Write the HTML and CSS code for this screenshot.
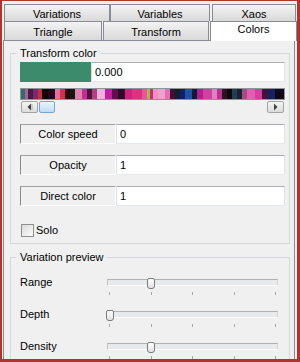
FILE: index.html
```html
<!DOCTYPE html>
<html>
<head>
<meta charset="utf-8">
<link rel="stylesheet" href="styles.css">
</head>
<body>
<div class="window">
  <div class="tabs">
    <div class="tabrow first">
      <div class="tab w-variations">Variations</div>
      <div class="tab w-variables">Variables</div>
      <div class="tab w-xaos">Xaos</div>
    </div>
    <div class="tabrow second">
      <div class="tab w-triangle">Triangle</div>
      <div class="tab w-transform">Transform</div>
      <div class="tab active w-colors">Colors</div>
    </div>
  </div>
  <div class="page">
    <fieldset class="group group-color">
      <legend>Transform color</legend>
      <div class="color-row">
        <div class="swatch"></div>
        <div class="field">0.000</div>
      </div>
      <div class="gradient"></div>
      <div class="hscroll">
        <div class="sbtn"><svg width="7" height="8" viewBox="0 0 7 8"><path d="M5 0.5 L1.5 4 L5 7.5 Z" fill="#404040"/><path d="M6 1 L6 7" stroke="#b0b0b0" stroke-width="1"/></svg></div>
        <div class="sthumb"></div>
        <div class="strack"></div>
        <div class="sbtn"><svg width="7" height="8" viewBox="0 0 7 8"><path d="M2 0.5 L5.5 4 L2 7.5 Z" fill="#404040"/></svg></div>
      </div>
      <div class="prop first-prop">
        <div class="plabel">Color speed</div>
        <div class="field">0</div>
      </div>
      <div class="prop">
        <div class="plabel">Opacity</div>
        <div class="field">1</div>
      </div>
      <div class="prop">
        <div class="plabel">Direct color</div>
        <div class="field">1</div>
      </div>
      <div class="check"><span class="box"></span><span class="check-text">Solo</span></div>
    </fieldset>
    <fieldset class="group group-preview">
      <legend>Variation preview</legend>
      <div class="slider-row first-slider">
        <div class="slabel">Range</div>
        <div class="slider">
          <div class="track"></div>
          <div class="thumb" style="left:41px"></div>
          <div class="ticks"><i></i><i></i><i></i><i></i><i></i></div>
        </div>
      </div>
      <div class="slider-row">
        <div class="slabel">Depth</div>
        <div class="slider">
          <div class="track"></div>
          <div class="thumb" style="left:0px"></div>
          <div class="ticks"><i></i><i></i><i></i><i></i><i></i></div>
        </div>
      </div>
      <div class="slider-row">
        <div class="slabel">Density</div>
        <div class="slider">
          <div class="track"></div>
          <div class="thumb" style="left:41px"></div>
          <div class="ticks"><i></i><i></i><i></i><i></i><i></i></div>
        </div>
      </div>
    </fieldset>
  </div>
</div>
</body>
</html>
```

FILE: styles.css
```css
* { box-sizing: border-box; }

body {
  margin: 0;
  font-family: "Liberation Sans", Arial, sans-serif;
  font-size: 11px;
  color: #000;
  background: #f0f0f0;
}

.window {
  width: 300px;
  height: 362px;
  border-style: solid;
  border-color: #b3332c;
  border-width: 1px 3px 3px 2px;
  background: #f0f0f0;
  overflow: hidden;
}

/* ---------- tabs ---------- */
.tabs {
  padding: 3px 0 0 2px;
}

.tabrow {
  display: flex;
}

.tabrow.first { height: 17px; }
.tabrow.second { height: 19px; }

.tab {
  border: 1px solid #898c95;
  border-bottom: none;
  background: linear-gradient(#f3f3f3, #e6e6e6 50%, #d9d9d9);
  text-align: center;
  white-space: nowrap;
}

.first .tab { line-height: 16px; padding-top: 1px; }
.second .tab { line-height: 18px; padding-top: 1px; }

.w-variations { width: 106px; }
.w-variables { width: 100px; }
.w-xaos { width: 84px; margin-left: 2px; }
.w-triangle { width: 98px; }
.w-transform { width: 106px; margin-left: 1px; }
.w-colors { width: 87px; margin-left: 1px; }

.second .tab.active {
  background: #ffffff;
  height: 20px;
  line-height: 15px;
  padding-top: 0;
  position: relative;
  z-index: 1;
}

/* ---------- page ---------- */
.page {
  margin-left: 1px;
  width: 292px;
  height: 330px;
  border: 1px solid #898c95;
  background: #f0f0f0;
}

.group {
  margin: 6px 0 0 6px;
  width: 280px;
  padding: 0 4px 6px 9px;
  border: 1px solid #d5d9dd;
  min-width: 0;
}

.group legend {
  padding: 0 3px 0 4px;
  margin-left: -4px;
  line-height: 13px;
}

.group-preview {
  margin-top: 7px;
}

/* colour row */
.color-row {
  display: flex;
  height: 20px;
  margin-top: 2px;
}

.swatch {
  width: 71px;
  background: #3b8b6c;
}

.field {
  flex: 1;
  background: #ffffff;
  border: 1px solid;
  border-color: #abadb3 #e2e3ea #e3e9ef #dbdfe6;
  padding: 0 3px;
  line-height: 18px;
}

/* gradient */
.gradient {
  margin-top: 6px;
  height: 12px;
  border: 1px solid #8f939a;
  background: linear-gradient(to right,
    #2a6e6e 0 4px, #b06090 4px 7px, #4a1848 7px 12px, #7a2a6a 12px 17px,
    #c03040 17px 21px, #100008 21px 27px, #200818 27px 34px, #e070a0 34px 39px,
    #d03050 39px 44px, #300010 44px 49px, #101a10 49px 54px, #e080b0 54px 61px,
    #c03090 61px 66px, #501040 66px 71px, #b04080 71px 76px, #f0b0e0 76px 84px,
    #c020a0 84px 91px, #601050 91px 97px, #300828 97px 104px, #d02080 104px 111px,
    #e03080 111px 121px, #f050a0 121px 126px, #a0c040 126px 129px, #c03080 129px 132px,
    #f090c0 132px 137px, #f0a0d0 137px 144px, #e070b0 144px 149px, #401038 149px 154px,
    #102030 154px 159px, #102060 159px 164px, #2050a0 164px 171px, #101840 171px 176px,
    #b02090 176px 182px, #d040a0 182px 191px, #e080c0 191px 196px, #c03090 196px 201px,
    #301020 201px 206px, #100810 206px 211px, #204050 211px 216px, #202030 216px 221px,
    #a05080 221px 226px, #e060b0 226px 234px, #d040a0 234px 241px, #401040 241px 247px,
    #182060 247px 254px, #100818 254px 263px);
}

/* horizontal scrollbar */
.hscroll {
  display: flex;
  height: 12px;
  margin-top: 1px;
  padding: 0 1px;
}

.sbtn {
  width: 17px;
  border: 1px solid #a3a3a3;
  border-radius: 2px;
  background: linear-gradient(#f4f4f4, #dcdcdc);
  display: flex;
  align-items: center;
  justify-content: center;
}

.sthumb {
  width: 16px;
  margin-left: 1px;
  border: 1px solid #7da2ce;
  border-radius: 2px;
  background: linear-gradient(#eaf6fd, #bfdcf3);
}

.strack {
  flex: 1;
}

/* property rows */
.prop {
  display: flex;
  height: 20px;
  margin-top: 11px;
}

.prop.first-prop {
  margin-top: 11px;
}

.plabel {
  width: 96px;
  border-style: solid;
  border-width: 1px;
  border-color: #a0a0a0 #ffffff #ffffff #8a8a8a;
  text-align: center;
  line-height: 18px;
}

/* checkbox */
.check {
  display: flex;
  align-items: center;
  height: 13px;
  margin-top: 18px;
}

.box {
  width: 13px;
  height: 13px;
  margin-left: 1px;
  border: 1px solid #8e8f8f;
  background: linear-gradient(135deg, #dcdcdc, #fbfbfb);
}

.check-text {
  margin-left: 2px;
  line-height: 13px;
}

/* sliders */
.slider-row {
  display: flex;
  height: 32px;
}

.slider-row.first-slider {
  margin-top: 10px;
}

.slabel {
  width: 86px;
  line-height: 13px;
  margin-top: 2px;
}

.slider {
  position: relative;
  width: 173px;
  height: 32px;
}

.track {
  margin: 5px 0 0 1px;
  width: 171px;
  height: 7px;
  border-style: solid;
  border-width: 1px;
  border-color: #b0b0b0 #d8d8d8 #ffffff #c4c4c4;
  background: #e7eaea;
}

.thumb {
  position: absolute;
  top: 4px;
  width: 8px;
  height: 11px;
  border: 1px solid #7b7b7b;
  border-radius: 2px 2px 3px 3px;
  background: linear-gradient(#fdfdfd, #e2e2e2);
}

.ticks {
  display: flex;
  justify-content: space-between;
  padding: 0 3px;
  margin-top: 6px;
  height: 3px;
}

.ticks i {
  display: block;
  width: 1px;
  height: 3px;
  background: #a8a8a8;
}
```
